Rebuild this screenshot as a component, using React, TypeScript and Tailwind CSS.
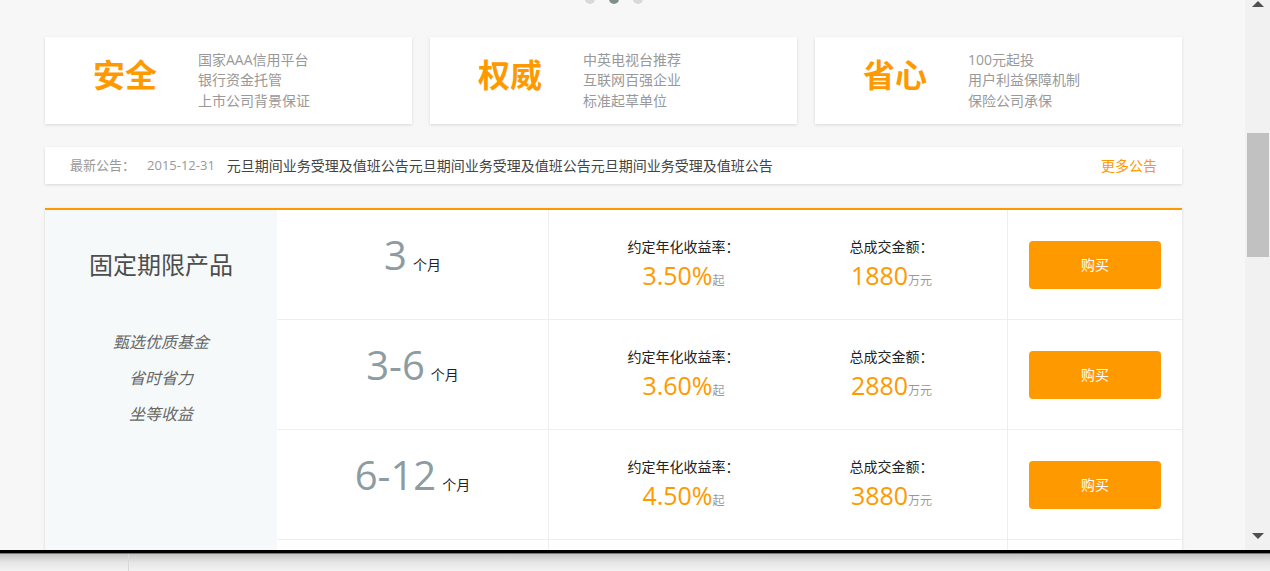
import React from "react";

const cards = [
  { title: "安全", lines: ["国家AAA信用平台", "银行资金托管", "上市公司背景保证"] },
  { title: "权威", lines: ["中英电视台推荐", "互联网百强企业", "标准起草单位"] },
  { title: "省心", lines: ["100元起投", "用户利益保障机制", "保险公司承保"] },
];

const rows = [
  { period: "3", rate: "3.50%", amount: "1880" },
  { period: "3-6", rate: "3.60%", amount: "2880" },
  { period: "6-12", rate: "4.50%", amount: "3880" },
];

export default function App() {
  return (
    <div className="w-[1270px] h-[571px] overflow-hidden flex flex-col bg-[#f7f7f7] font-['Open_Sans','Noto_Sans_CJK_SC',sans-serif]">
      <div className="flex h-[550px] overflow-hidden shrink-0">
        <div className="w-[1245px] h-full overflow-hidden shrink-0">
          <div className="ml-[45px] w-[1137px]">
            <div className="h-[4px] overflow-hidden flex justify-center items-end gap-[14px]">
              <div className="w-[10px] h-[10px] rounded-full bg-[#d9d9d9] shrink-0" />
              <div className="w-[10px] h-[10px] rounded-full bg-[#7f8f8b] shrink-0" />
              <div className="w-[10px] h-[10px] rounded-full bg-[#d9d9d9] shrink-0" />
            </div>

            <div className="mt-[33px] grid grid-cols-3 gap-[18px]">
              {cards.map((c) => (
                <div
                  key={c.title}
                  className="h-[87px] bg-white shadow-[0_1px_3px_rgba(0,0,0,0.13)] flex items-center pl-[48px]"
                >
                  <div className="w-[64px] mb-[11px] text-[32px] leading-[40px] font-bold text-[#ff9900] whitespace-nowrap">
                    {c.title}
                  </div>
                  <div className="ml-[41px] text-[14px] leading-[20.5px] text-[#999]">
                    {c.lines.map((l) => (
                      <div key={l}>{l}</div>
                    ))}
                  </div>
                </div>
              ))}
            </div>

            <div className="mt-[23px] h-[37px] bg-white shadow-[0_1px_3px_rgba(0,0,0,0.13)] flex items-center px-[25px]">
              <span className="text-[13px] text-[#999]">最新公告：</span>
              <span className="ml-[12px] text-[13px] text-[#999]">2015-12-31</span>
              <span className="ml-[12px] text-[14px] text-[#444]">
                元旦期间业务受理及值班公告元旦期间业务受理及值班公告元旦期间业务受理及值班公告
              </span>
              <span className="ml-auto text-[14px] text-[#ff9900]">更多公告</span>
            </div>

            <div className="mt-[24px] border-t-2 border-[#ff9900] bg-white shadow-[0_1px_3px_rgba(0,0,0,0.13)] flex">
              <div className="w-[232px] shrink-0 bg-[#f5f9f9] flex flex-col items-center pt-[40px]">
                <div className="text-[24px] leading-[30px] text-[#4d4d4d]">固定期限产品</div>
                <div className="mt-[44px] flex flex-col items-center text-[16px] leading-[36px] italic text-[#666]">
                  <div>甄选优质基金</div>
                  <div>省时省力</div>
                  <div>坐等收益</div>
                </div>
              </div>
              <div className="flex-1 flex flex-col">
                {rows.map((r) => (
                  <div key={r.period} className="h-[110px] border-b border-[#eeeeee] flex">
                    <div className="w-[272px] shrink-0 border-r border-[#eeeeee] flex justify-center items-start pt-[25px]">
                      <div className="flex items-baseline">
                        <span className="text-[40px] leading-[40px] text-[#8c9ca1]">{r.period}</span>
                        <span className="ml-[6px] text-[14px] leading-[20px] text-[#222]">个月</span>
                      </div>
                    </div>
                    <div className="w-[459px] shrink-0 border-r border-[#eeeeee] flex justify-center gap-[110px] pt-[27px] pl-[5px]">
                      <div className="flex flex-col items-center">
                        <div className="text-[14px] leading-[20px] text-[#222] whitespace-nowrap">约定年化收益率：</div>
                        <div className="mt-[3px] flex items-baseline leading-[30px] whitespace-nowrap">
                          <span className="text-[25px] text-[#ff9900]">{r.rate}</span>
                          <span className="text-[12px] text-[#999]">起</span>
                        </div>
                      </div>
                      <div className="flex flex-col items-center">
                        <div className="text-[14px] leading-[20px] text-[#222] whitespace-nowrap">总成交金额：</div>
                        <div className="mt-[3px] flex items-baseline leading-[30px] whitespace-nowrap">
                          <span className="text-[25px] text-[#ff9900]">{r.amount}</span>
                          <span className="text-[12px] text-[#999]">万元</span>
                        </div>
                      </div>
                    </div>
                    <div className="flex-1 flex items-center justify-center">
                      <button className="w-[132px] h-[48px] rounded-[4px] bg-[#ff9900] text-white text-[14px]">
                        购买
                      </button>
                    </div>
                  </div>
                ))}
                <div className="h-[110px] border-b border-[#eeeeee] flex">
                  <div className="w-[272px] shrink-0 border-r border-[#eeeeee]" />
                  <div className="w-[459px] shrink-0 border-r border-[#eeeeee]" />
                  <div className="flex-1" />
                </div>
              </div>
            </div>
          </div>
        </div>

        <div className="w-[25px] h-full bg-[#f1f1f1] flex flex-col items-center shrink-0">
          <svg width="12" height="6" viewBox="0 0 12 6" className="mt-[1px] shrink-0">
            <polygon points="6,0 12,6 0,6" fill="#505050" />
          </svg>
          <div className="mt-[126px] w-[22px] h-[124px] bg-[#c1c1c1] shrink-0" />
          <div className="flex-1" />
          <svg width="12" height="6" viewBox="0 0 12 6" className="mb-[11px] shrink-0">
            <polygon points="0,0 12,0 6,6" fill="#505050" />
          </svg>
        </div>
      </div>

      <div className="h-[3px] bg-black shrink-0" />
      <div className="h-[1px] bg-[#3b86c6] shrink-0" />
      <div className="flex-1 bg-linear-to-b from-[#c4c4c4] via-[#e6e6e6] to-[#f2f2f2] flex">
        <div className="ml-[128px] w-px h-full bg-[#d8d8d8]" />
      </div>
    </div>
  );
}
